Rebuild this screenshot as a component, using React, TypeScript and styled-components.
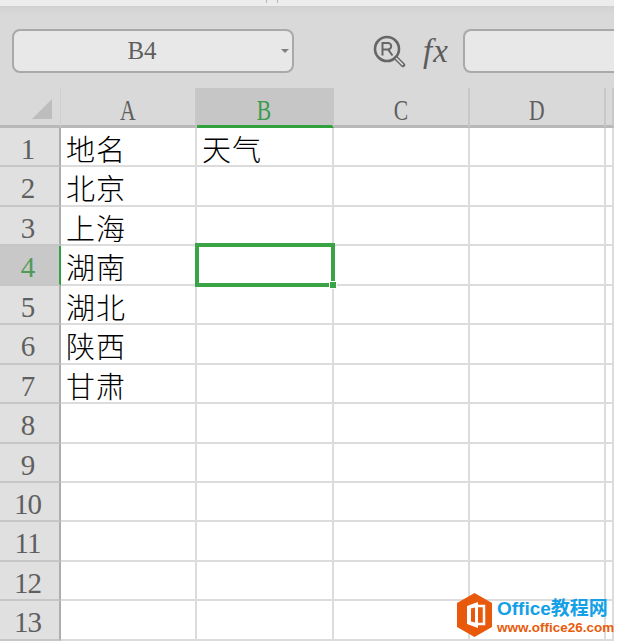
import React from "react";
import styled, { createGlobalStyle } from "styled-components";

const Global = createGlobalStyle`
  html, body { margin: 0; padding: 0; background: #fff; }
  body { width: 619px; height: 642px; overflow: hidden; }
`;

const Sheet = styled.div`
  position: relative;
  width: 614px;
  height: 642px;
  overflow: hidden;
  font-family: "Liberation Serif", serif;
`;

const TopStrip = styled.div`
  height: 6px;
  background: #ececec;
  border-bottom: 1px solid #d0d0d0;
  display: flex;
  justify-content: flex-end;
  padding-right: 336px;
  gap: 10px;
`;

const TopTick = styled.span`
  width: 1px;
  height: 3px;
  background: #b4b4b4;
`;

const Toolbar = styled.div`
  height: 81px;
  box-sizing: border-box;
  background: linear-gradient(#d2d2d2 0, #d9d9d9 8px);
  padding: 22px 0 15px 12px;
  display: flex;
  align-items: stretch;
`;

const NameBox = styled.div`
  width: 282px;
  box-sizing: border-box;
  border: 2px solid #a9a9a9;
  border-radius: 8px;
  background: #e8e8e8;
  position: relative;
  display: flex;
  align-items: center;
  justify-content: center;
  padding-right: 22px;
  font-size: 25px;
  color: #5f5f5f;
`;

const Caret = styled.span`
  position: absolute;
  right: 3px;
  top: 18px;
  width: 0;
  height: 0;
  border-left: 4px solid transparent;
  border-right: 4px solid transparent;
  border-top: 4px solid #808080;
`;

const ToolIcons = styled.div`
  width: 169px;
  display: flex;
  align-items: center;
  padding-left: 79px;
  box-sizing: border-box;
  gap: 17px;
`;

const FxLabel = styled.span`
  font-family: "Liberation Serif", serif;
  font-style: italic;
  font-size: 33px;
  line-height: 30px;
  letter-spacing: 1px;
  color: #5c5c5c;
`;

const FormulaBox = styled.div`
  flex: 1;
  box-sizing: border-box;
  border: 2px solid #a9a9a9;
  border-right: none;
  border-radius: 8px 0 0 8px;
  background: #e8e8e8;
`;

const Grid = styled.div`
  display: grid;
  grid-template-columns: 61px 136px 137px 136px 136px 8px;
  grid-template-rows: 40px 39px 40px 39px 40px 39px 40px 39px 40px 39px 39px 40px 39px 40px;
`;

const Corner = styled.div`
  background: #d9d9d9;
  border-bottom: 3px solid #b8b8b8;
  border-right: 1px solid #cfcfcf;
  box-sizing: border-box;
  position: relative;
`;

const CornerMark = styled.span`
  position: absolute;
  right: 8px;
  bottom: 6px;
  width: 0;
  height: 0;
  border-left: 20px solid transparent;
  border-bottom: 20px solid #bdbdbd;
`;

const ColHead = styled.div<{ $active?: boolean }>`
  box-sizing: border-box;
  display: flex;
  align-items: center;
  justify-content: center;
  padding-top: 6px;
  font-size: 30px;
  background: ${(p) => (p.$active ? "#c6c6c6" : "#d9d9d9")};
  color: ${(p) => (p.$active ? "#3d9a4b" : "#5f5f5f")};
  border-bottom: 3px solid ${(p) => (p.$active ? "#2fa23d" : "#b8b8b8")};
  border-right: 2px solid ${(p) => (p.$active ? "#c6c6c6" : "#c8c8c8")};
`;

const ColLetter = styled.span`
  display: inline-block;
  transform: scaleX(0.72);
`;

const RowHead = styled.div<{ $active?: boolean }>`
  box-sizing: border-box;
  display: flex;
  align-items: center;
  justify-content: center;
  padding: 5px 4px 0 0;
  font-size: 29px;
  letter-spacing: -1px;
  background: ${(p) => (p.$active ? "#c8c8c8" : "#e0e0e0")};
  color: ${(p) => (p.$active ? "#4f9a58" : "#5f5f5f")};
  border-bottom: 2px solid #c6c6c6;
  border-right: 2px solid ${(p) => (p.$active ? "#2fa23d" : "#aeaeae")};
`;

const Cell = styled.div`
  box-sizing: border-box;
  background: #fff;
  border-right: 2px solid #dcdcdc;
  border-bottom: 2px solid #dcdcdc;
  padding: 2px 0 0 5px;
  display: flex;
  align-items: center;
  font-family: "Noto Sans CJK SC", "Liberation Sans", sans-serif;
  font-weight: 300;
  font-size: 29px;
  letter-spacing: 1px;
  color: #000;
  white-space: nowrap;
`;

const Selection = styled.div`
  position: absolute;
  left: 195px;
  top: 243px;
  width: 140px;
  height: 44px;
  box-sizing: border-box;
  border: 4px solid #3aa346;
`;

const Handle = styled.span`
  position: absolute;
  right: -6px;
  bottom: -6px;
  width: 8px;
  height: 8px;
  background: #3aa346;
  border: 1px solid #fff;
  box-sizing: border-box;
`;

const Watermark = styled.div`
  position: absolute;
  left: 456px;
  top: 593px;
  display: flex;
  align-items: center;
  gap: 4px;
  white-space: nowrap;
`;

const MarkText = styled.div`
  display: flex;
  flex-direction: column;
  padding-top: 2px;
  font-family: "Liberation Sans", "Noto Sans CJK SC", sans-serif;
  font-weight: 700;
`;

const MarkTitle = styled.span`
  font-size: 19px;
  line-height: 22px;
  color: #14a0e6;
`;

const MarkUrl = styled.span`
  font-size: 13.5px;
  line-height: 15px;
  color: #ea5b0c;
`;

const colHeads = ["A", "B", "C", "D", ""];
const rows: [string, string][] = [
  ["地名", "天气"],
  ["北京", ""],
  ["上海", ""],
  ["湖南", ""],
  ["湖北", ""],
  ["陕西", ""],
  ["甘肃", ""],
  ["", ""], ["", ""], ["", ""], ["", ""], ["", ""], ["", ""],
];

export default function App() {
  return (
    <Sheet>
      <Global />
      <TopStrip>
        <TopTick />
        <TopTick />
      </TopStrip>
      <Toolbar>
        <NameBox>
          B4
          <Caret />
        </NameBox>
        <ToolIcons>
          <svg width="33" height="33" viewBox="0 0 33 33" fill="none" stroke="#666" strokeWidth="2">
            <circle cx="14" cy="14" r="12" strokeWidth="2.6" />
            <path d="M9.5 20.5V8h5.5a3.2 3.2 0 0 1 0 6.4H9.5M15 14.4l4.5 6.1" />
            <path d="M23 23l7 7" strokeWidth="4.5" strokeLinecap="round" />
            <path d="M23.5 23.5l6 6" stroke="#e2e2e2" strokeWidth="1.6" strokeLinecap="round" />
          </svg>
          <FxLabel>fx</FxLabel>
        </ToolIcons>
        <FormulaBox />
      </Toolbar>
      <Grid>
        <Corner><CornerMark /></Corner>
        {colHeads.map((c, i) => (
          <ColHead key={i} $active={c === "B"}><ColLetter>{c}</ColLetter></ColHead>
        ))}
        {rows.map((r, i) => (
          <React.Fragment key={i}>
            <RowHead $active={i === 3}>{i + 1}</RowHead>
            <Cell>{r[0]}</Cell>
            <Cell>{r[1]}</Cell>
            <Cell />
            <Cell />
            <Cell />
          </React.Fragment>
        ))}
      </Grid>
      <Selection><Handle /></Selection>
      <Watermark>
        <svg width="37" height="44" viewBox="0 0 37 44">
          <path d="M18.5 0L36 10V34L18.5 44L1 34V10Z" fill="#e8590c" />
          <path d="M11 13L22 9V35L11 31Z" fill="#fff" />
          <path d="M22 13H28V31H22" fill="none" stroke="#fff" strokeWidth="2.5" />
          <path d="M15 15.5L19 14.5V29.5L15 28.5Z" fill="#e8590c" />
        </svg>
        <MarkText>
          <MarkTitle>Office教程网</MarkTitle>
          <MarkUrl>www.office26.com</MarkUrl>
        </MarkText>
      </Watermark>
    </Sheet>
  );
}
